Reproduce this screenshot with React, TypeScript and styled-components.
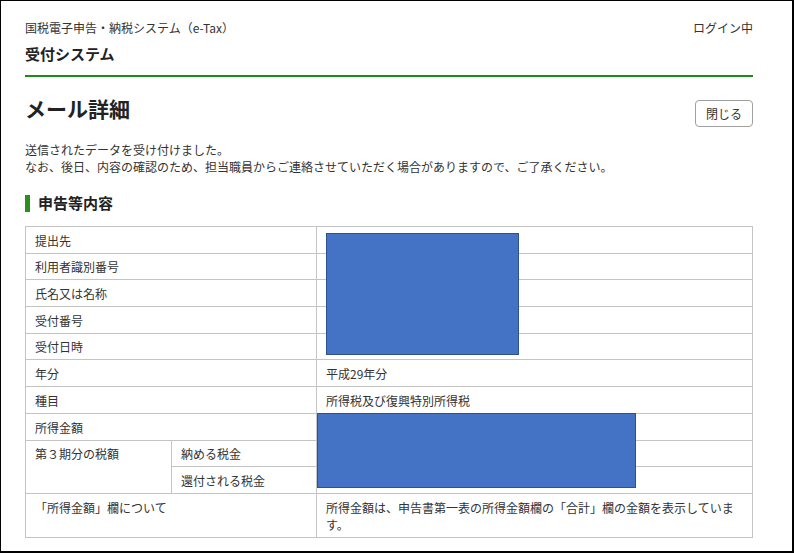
import styled, {createGlobalStyle} from "styled-components";

const GlobalStyle = createGlobalStyle`
body {
    margin: 0;
    background: #ffffff;
    font-family: "Noto Sans CJK JP", "Noto Sans", sans-serif;
    color: #333333;
}
`;

const Frame = styled.div`
    width: 794px;
    height: 553px;
    box-sizing: border-box;
    border-style: solid;
    border-color: #000000;
    border-width: 1px 2px 2px 1px;
    padding: 18px 39px 0 24px;
    overflow: hidden;
`;

const TopRow = styled.div`
    display: flex;
    justify-content: space-between;
    font-size: 12px;
    line-height: 18px;
    color: #333333;
`;

const SystemName = styled.div`
    margin-top: 7px;
    font-size: 15px;
    line-height: 20px;
    font-weight: bold;
    color: #222222;
`;

const GreenRule = styled.hr`
    margin: 11px 0 0;
    border: none;
    height: 2px;
    background: #1e8a1e;
`;

const TitleRow = styled.div`
    display: flex;
    justify-content: space-between;
    align-items: flex-start;
    margin-top: 17px;
`;

const PageTitle = styled.h1`
    margin: 0;
    font-size: 21px;
    line-height: 28px;
    font-weight: bold;
    color: #222222;
`;

const CloseButton = styled.button`
    margin-top: 6px;
    width: 58px;
    height: 27px;
    padding: 0;
    background: #ffffff;
    border: 1px solid #a0a0a0;
    border-radius: 4px;
    font-family: inherit;
    font-size: 12px;
    color: #333333;
`;

const Message = styled.p`
    margin: 14px 0 0;
    font-size: 12px;
    line-height: 17px;
`;

const SectionTitle = styled.h2`
    display: flex;
    align-items: center;
    gap: 8px;
    margin: 19px 0 0;
    font-size: 15px;
    line-height: 18px;
    font-weight: bold;
    color: #222222;
    &::before {
        content: "";
        width: 5px;
        height: 17px;
        background: #2a8f1e;
    }
`;

const TableWrap = styled.div`
    position: relative;
    margin-top: 14px;
`;

const Table = styled.table`
    width: 100%;
    border-collapse: collapse;
    table-layout: fixed;
    font-size: 12px;
    line-height: 17px;
    color: #333333;
`;

const Cell = styled.td<{ $top?: boolean }>`
    border: 1px solid #c4c4c4;
    padding: 4.7px 9px 4px;
    height: 17px;
    vertical-align: ${p => (p.$top ? "top" : "middle")};
    word-break: break-all;
`;

const Redaction = styled.div`
    position: absolute;
    box-sizing: border-box;
    background: #4472c4;
    border: 1px solid #2f528f;
`;

const rows: [string, string][] = [
    ["提出先", ""],
    ["利用者識別番号", ""],
    ["氏名又は名称", ""],
    ["受付番号", ""],
    ["受付日時", ""],
    ["年分", "平成29年分"],
    ["種目", "所得税及び復興特別所得税"],
    ["所得金額", ""],
];

export default function App() {
    return (
        <>
            <GlobalStyle/>
            <Frame>
                <TopRow>
                    <span>国税電子申告・納税システム（e-Tax）</span>
                    <span>ログイン中</span>
                </TopRow>
                <SystemName>受付システム</SystemName>
                <GreenRule/>
                <TitleRow>
                    <PageTitle>メール詳細</PageTitle>
                    <CloseButton>閉じる</CloseButton>
                </TitleRow>
                <Message>
                    送信されたデータを受け付けました。<br/>
                    なお、後日、内容の確認のため、担当職員からご連絡させていただく場合がありますので、ご了承ください。
                </Message>
                <SectionTitle>申告等内容</SectionTitle>
                <TableWrap>
                    <Table>
                        <colgroup>
                            <col style={{width: "146px"}}/>
                            <col style={{width: "145px"}}/>
                            <col/>
                        </colgroup>
                        <tbody>
                        {rows.map(([label, value]) => (
                            <tr key={label}>
                                <Cell colSpan={2}>{label}</Cell>
                                <Cell>{value}</Cell>
                            </tr>
                        ))}
                        <tr>
                            <Cell rowSpan={2} $top>第３期分の税額</Cell>
                            <Cell>納める税金</Cell>
                            <Cell></Cell>
                        </tr>
                        <tr>
                            <Cell>還付される税金</Cell>
                            <Cell></Cell>
                        </tr>
                        <tr>
                            <Cell colSpan={2} $top>「所得金額」欄について</Cell>
                            <Cell>所得金額は、申告書第一表の所得金額欄の「合計」欄の金額を表示しています。</Cell>
                        </tr>
                        </tbody>
                    </Table>
                    <Redaction style={{left: 301, top: 7, width: 193, height: 122}}/>
                    <Redaction style={{left: 292, top: 187, width: 319, height: 75}}/>
                </TableWrap>
            </Frame>
        </>
    );
}
